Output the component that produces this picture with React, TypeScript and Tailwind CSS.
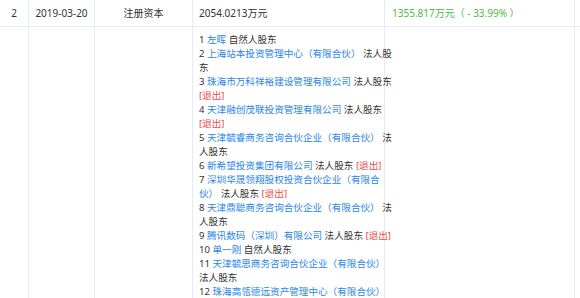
import React from "react"

type Part = { t: string; c?: "link" | "red" }

const holders: Part[][][] = [
  [[{ t: "1 " }, { t: "左晖", c: "link" }, { t: " 自然人股东" }]],
  [
    [{ t: "2 " }, { t: "上海站本投资管理中心（有限合伙）", c: "link" }, { t: " 法人股" }],
    [{ t: "东" }],
  ],
  [
    [{ t: "3 " }, { t: "珠海市万科祥裕建设管理有限公司", c: "link" }, { t: " 法人股东" }],
    [{ t: "[退出]", c: "red" }],
  ],
  [
    [{ t: "4 " }, { t: "天津融创茂联投资管理有限公司", c: "link" }, { t: " 法人股东" }],
    [{ t: "[退出]", c: "red" }],
  ],
  [
    [{ t: "5 " }, { t: "天津毓睿商务咨询合伙企业（有限合伙）", c: "link" }, { t: " 法" }],
    [{ t: "人股东" }],
  ],
  [[{ t: "6 " }, { t: "新希望投资集团有限公司", c: "link" }, { t: " 法人股东 " }, { t: "[退出]", c: "red" }]],
  [
    [{ t: "7 " }, { t: "深圳华晟领翔股权投资合伙企业（有限合", c: "link" }],
    [{ t: "伙）", c: "link" }, { t: " 法人股东 " }, { t: "[退出]", c: "red" }],
  ],
  [
    [{ t: "8 " }, { t: "天津鼎聪商务咨询合伙企业（有限合伙）", c: "link" }, { t: " 法" }],
    [{ t: "人股东" }],
  ],
  [[{ t: "9 " }, { t: "腾讯数码（深圳）有限公司", c: "link" }, { t: " 法人股东 " }, { t: "[退出]", c: "red" }]],
  [[{ t: "10 " }, { t: "单一刚", c: "link" }, { t: " 自然人股东" }]],
  [
    [{ t: "11 " }, { t: "天津毓思商务咨询合伙企业（有限合伙）", c: "link" }],
    [{ t: "法人股东" }],
  ],
  [[{ t: "12 " }, { t: "珠海高瓴德远资产管理中心（有限合伙）", c: "link" }]],
]

function partClass(c?: "link" | "red") {
  if (c === "link") return "text-[#2a86e8]"
  if (c === "red") return "text-[#ee4b4b]"
  return ""
}

export default function App() {
  const cell = "border-r border-[#e6ecf5]"
  return (
    <div
      className="w-[580px] h-[298px] overflow-hidden bg-white text-[10px] text-[#333]"
      style={{ fontFamily: '"Noto Sans", "Noto Sans CJK SC", sans-serif' }}
    >
      <div className="grid grid-cols-[29px_66px_98px_192px_190px] border-b border-[#e6ecf5] h-[27px] leading-[27px]">
        <div className={`${cell} text-center`}>2</div>
        <div className={`${cell} text-center`}>2019-03-20</div>
        <div className={`${cell} text-center`}>注册资本</div>
        <div className={`${cell} pl-[6px]`}>2054.0213万元</div>
        <div className={`${cell} pl-[7px] text-[#4cbb47]`}>1355.817万元（ - 33.99% ）</div>
      </div>
      <div className="grid grid-cols-[29px_66px_98px_192px_190px] h-[280px]">
        <div className={cell}></div>
        <div className={cell}></div>
        <div className={cell}></div>
        <div className={`${cell} pl-[6px] pt-[6px] text-[9.6px] leading-[14px]`}>
          {holders.map((lines, i) => (
            <div key={i}>
              {lines.map((line, j) => (
                <div key={j} className="whitespace-pre">
                  {line.map((p, k) => (
                    <span key={k} className={partClass(p.c)}>
                      {p.t}
                    </span>
                  ))}
                </div>
              ))}
            </div>
          ))}
        </div>
        <div className={cell}></div>
      </div>
    </div>
  )
}
